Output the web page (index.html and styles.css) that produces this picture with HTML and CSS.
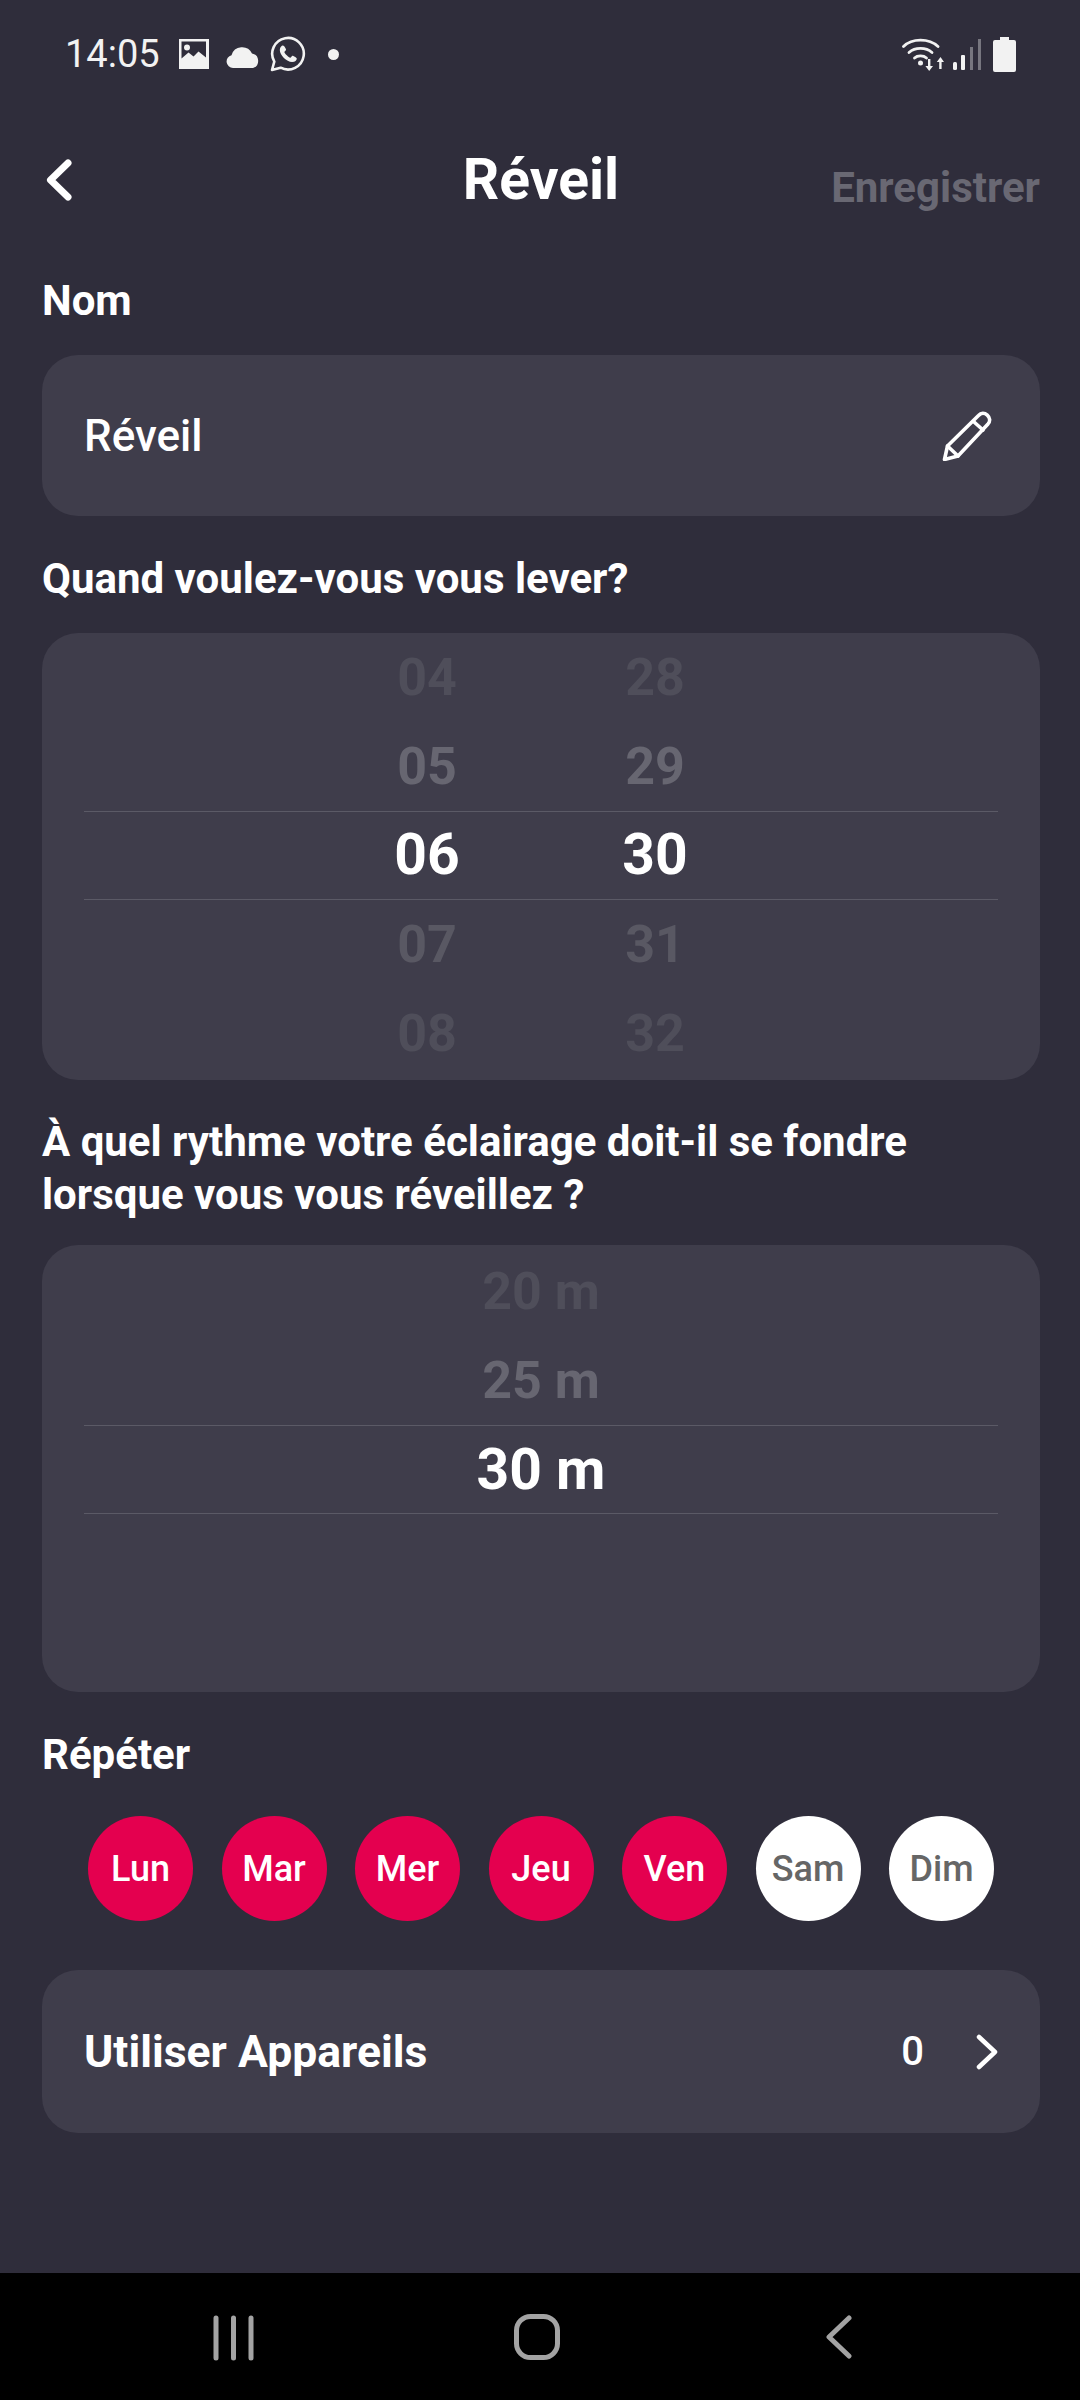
FILE: index.html
```html
<!DOCTYPE html>
<html lang="fr">
<head>
<meta charset="utf-8">
<title>Réveil</title>
<link rel="stylesheet" href="styles.css">
</head>
<body>
<div class="screen">
  <div class="status">
    <div class="status-left">
      <span class="time">14:05</span>
      <svg class="ic-image" viewBox="0 0 32 32"><path fill="#f2f2f2" fill-rule="evenodd" d="M1 1h30v30H1zM3.500 3.500v17l7-6 5 4 5-5 7.500 6v-16zM9 6.500a3 3 0 1 1 0 6a3 3 0 0 1 0-6z"/></svg>
      <svg class="ic-cloud" viewBox="0 0 34 24"><path fill="#f2f2f2" d="M7 24a6.500 6.500 0 0 1-1.500-12.800A11 11 0 0 1 26 9.500 7.500 7.500 0 0 1 27 24z"/></svg>
      <svg class="ic-wa" viewBox="0 0 36 36"><path fill="none" stroke="#f2f2f2" stroke-width="2.600" stroke-linejoin="round" d="M2 34l2.300-8.400A15.800 15.800 0 1 1 10.600 31.700z"/><path fill="#f2f2f2" d="M12.800 9.500c-1 0-3 1.600-3 4.600 0 5 6.800 12 12.300 12 3 0 4.700-2 4.700-3.600 0-.8-3.600-2.800-4.300-2.800-.6 0-1.500 2-2.300 2-1.300 0-5.800-4.200-5.800-5.600 0-.8 1.700-1.500 1.700-2.300 0-.7-1.600-4.300-3.300-4.300z"/></svg>
      <span class="dot"></span>
    </div>
    <div class="status-right">
      <svg class="ic-wifi" viewBox="0 0 42 34"><g fill="none" stroke="#f2f2f2" stroke-width="2.800" stroke-linecap="round"><path d="M1.500 9.500C10 1 27 1 36 9.500"/><path d="M7 15.500c6-5.500 17-5.500 23 0"/><path d="M12.500 21c3-2.800 9-2.800 12 0"/></g><circle cx="18.500" cy="26" r="2.500" fill="#f2f2f2"/><path fill="#f2f2f2" d="M26 22h2.400v7H31l-3.800 5-3.800-5H26zM38.500 20l3.500 5h-2.400v7h-2.400v-7h-2.400z"/></svg>
      <svg class="ic-signal" viewBox="0 0 29 31"><rect x="0" y="23" width="4" height="8" rx="1.500" fill="#f2f2f2"/><rect x="8" y="16" width="4" height="15" rx="1" fill="#f2f2f2"/><rect x="17" y="8" width="3" height="23" fill="#77767f"/><rect x="25" y="0" width="3" height="31" fill="#77767f"/></svg>
      <svg class="ic-batt" viewBox="0 0 23 35"><path fill="#f2f2f2" d="M7 0h9v3h5a2 2 0 0 1 2 2v28a2 2 0 0 1-2 2H2a2 2 0 0 1-2-2V5a2 2 0 0 1 2-2h5z"/></svg>
    </div>
  </div>

  <main class="content">
    <header class="topbar">
      <svg class="ic-back" viewBox="0 0 26 42"><path fill="none" stroke="#fff" stroke-width="7" stroke-linecap="round" stroke-linejoin="round" d="M22 4 4.500 21 22 38"/></svg>
      <h1 class="title">Réveil</h1>
      <span class="save">Enregistrer</span>
    </header>

    <h2 class="label label-first">Nom</h2>
    <div class="card name-card">
      <span class="name">Réveil</span>
      <svg class="ic-pencil" viewBox="0 0 50 50"><g fill="none" stroke="#fff" stroke-width="3.600" stroke-linejoin="round" stroke-linecap="round"><path d="M36.500 4.500c2.500-2.800 6-2.800 8.800-.3 2.800 2.600 3.100 6 .7 8.700L16 45 2.500 48.500 5.500 35z"/><path d="M31.500 10.500 41 19"/><path d="M5.500 35 16 45"/></g></svg>
    </div>

    <h2 class="label">Quand voulez-vous vous lever?</h2>
    <div class="card picker">
      <div class="row row-time f1"><span>04</span><span>28</span></div>
      <div class="row row-time f2"><span>05</span><span>29</span></div>
      <div class="row row-time sel sel-time"><span>06</span><span>30</span></div>
      <div class="row row-time f2b"><span>07</span><span>31</span></div>
      <div class="row row-time f1"><span>08</span><span>32</span></div>
    </div>

    <h2 class="label label-two">À quel rythme votre éclairage doit-il se fondre<br>lorsque vous vous réveillez ?</h2>
    <div class="card picker picker-fade">
      <div class="row f1"><span>20 m</span></div>
      <div class="row f2"><span>25 m</span></div>
      <div class="row sel"><span>30 m</span></div>
      <div class="row"></div>
    </div>

    <h2 class="label">Répéter</h2>
    <div class="days">
      <span class="day on">Lun</span>
      <span class="day on">Mar</span>
      <span class="day on">Mer</span>
      <span class="day on">Jeu</span>
      <span class="day on">Ven</span>
      <span class="day">Sam</span>
      <span class="day">Dim</span>
    </div>

    <div class="card devices">
      <span class="devices-label">Utiliser Appareils</span>
      <span class="count">0</span>
      <svg class="ic-next" viewBox="0 0 22 36"><path fill="none" stroke="#fff" stroke-width="4.500" stroke-linecap="round" stroke-linejoin="round" d="M3 3l16 15L3 33"/></svg>
    </div>
  </main>

  <nav class="navbar">
    <svg class="ic-recent" viewBox="0 0 42 46"><g stroke="#a3a3a3" stroke-width="5" stroke-linecap="round"><path d="M3 3v40"/><path d="M20.500 3v40"/><path d="M38 3v40"/></g></svg>
    <svg class="ic-home" viewBox="0 0 46 46"><rect x="2.500" y="2.500" width="41" height="41" rx="14" fill="none" stroke="#a3a3a3" stroke-width="5"/></svg>
    <svg class="ic-nback" viewBox="0 0 26 44"><path fill="none" stroke="#a3a3a3" stroke-width="5" stroke-linecap="round" stroke-linejoin="round" d="M23 3 3 22l20 19"/></svg>
  </nav>
</div>
</body>
</html>
```

FILE: styles.css
```css
* { box-sizing: border-box; }
html, body { margin: 0; padding: 0; }
body {
  width: 1080px;
  height: 2400px;
  overflow: hidden;
  background: #2f2d3b;
  font-family: Roboto, "Liberation Sans", sans-serif;
  color: #fff;
}
.screen { display: flex; flex-direction: column; width: 1080px; height: 2400px; }

.status {
  flex: none;
  height: 108px;
  padding: 36px 64px 0 65px;
  display: flex;
  justify-content: space-between;
  align-items: flex-start;
}
.status-left, .status-right { display: flex; align-items: center; height: 36px; }
.time { font-size: 38px; font-weight: 400; color: #f2f2f2; line-height: 36px; width: 113px; }
.ic-image { width: 32px; height: 32px; margin-right: 16px; }
.ic-cloud { width: 34px; height: 24px; margin-right: 10px; margin-top: 4px; }
.ic-wa { width: 36px; height: 36px; margin-right: 22px; }
.dot { width: 11px; height: 11px; border-radius: 50%; background: #f2f2f2; }
.ic-wifi { width: 42px; height: 34px; margin-right: 9px; }
.ic-signal { width: 29px; height: 31px; margin-right: 11px; }
.ic-batt { width: 23px; height: 35px; }

.content { flex: 1; padding: 0 40px 0 42px; display: flex; flex-direction: column; }

.topbar {
  position: relative;
  height: 144px;
  display: flex;
  align-items: center;
  justify-content: space-between;
  margin-bottom: 22px;
}
.ic-back { width: 26px; height: 42px; margin-left: 4px; margin-top: -1px; }
.title {
  position: absolute;
  left: 0;
  right: 0;
  margin: 0;
  text-align: center;
  font-size: 57px;
  font-weight: 700;
  line-height: 64px;
  pointer-events: none;
}
.save { font-size: 42px; font-weight: 700; color: #696873; margin-top: 14px; }

.label {
  margin: 36px 0 28px;
  font-size: 42px;
  font-weight: 700;
  line-height: 53px;
}
.label-first { margin-top: 0; }
.label-two { margin-top: 35px; margin-bottom: 24px; }

.card { background: #3f3d4b; border-radius: 36px; }

.name-card {
  height: 161px;
  padding: 0 48px 0 42px;
  display: flex;
  align-items: center;
  justify-content: space-between;
}
.name { font-size: 44px; font-weight: 500; }
.ic-pencil { width: 50px; height: 50px; }

.picker { height: 447px; padding: 0 42px; }
.picker-fade { padding-top: 2px; }
.row {
  height: 89px;
  display: flex;
  align-items: center;
  justify-content: center;
  font-size: 52px;
  font-weight: 700;
  color: #55545f;
}
.row-time { display: grid; grid-template-columns: 228px 228px; justify-items: center; justify-content: center; }
.f1 { color: #4f4e5a; }
.f2 { color: #676671; }
.f2b { color: #595863; }
.sel {
  font-size: 57px;
  color: #fff;
  border-top: 1px solid #5b5a66;
  border-bottom: 1px solid #5b5a66;
}
.sel-time { padding-bottom: 2px; }

.days { display: flex; justify-content: space-between; padding: 0 46px; margin-top: 7px; }
.day {
  width: 105px;
  height: 105px;
  border-radius: 50%;
  background: #fff;
  color: #666;
  display: flex;
  align-items: center;
  justify-content: center;
  font-size: 36px;
  font-weight: 500;
}
.day.on { background: #e4004f; color: #fff; }

.devices {
  margin-top: 49px;
  height: 163px;
  padding: 0 42px 0 42px;
  display: flex;
  align-items: center;
}
.devices-label { flex: 1; font-size: 44.500px; font-weight: 700; }
.count { font-size: 40px; font-weight: 500; margin-right: 52px; }
.ic-next { width: 22px; height: 36px; }

.navbar {
  flex: none;
  height: 127px;
  background: #000;
  position: relative;
}
.navbar svg { position: absolute; }
.ic-recent { left: 213px; top: 42px; width: 42px; height: 46px; }
.ic-home { left: 514px; top: 41px; width: 46px; height: 46px; }
.ic-nback { left: 826px; top: 42px; width: 26px; height: 44px; }
```
